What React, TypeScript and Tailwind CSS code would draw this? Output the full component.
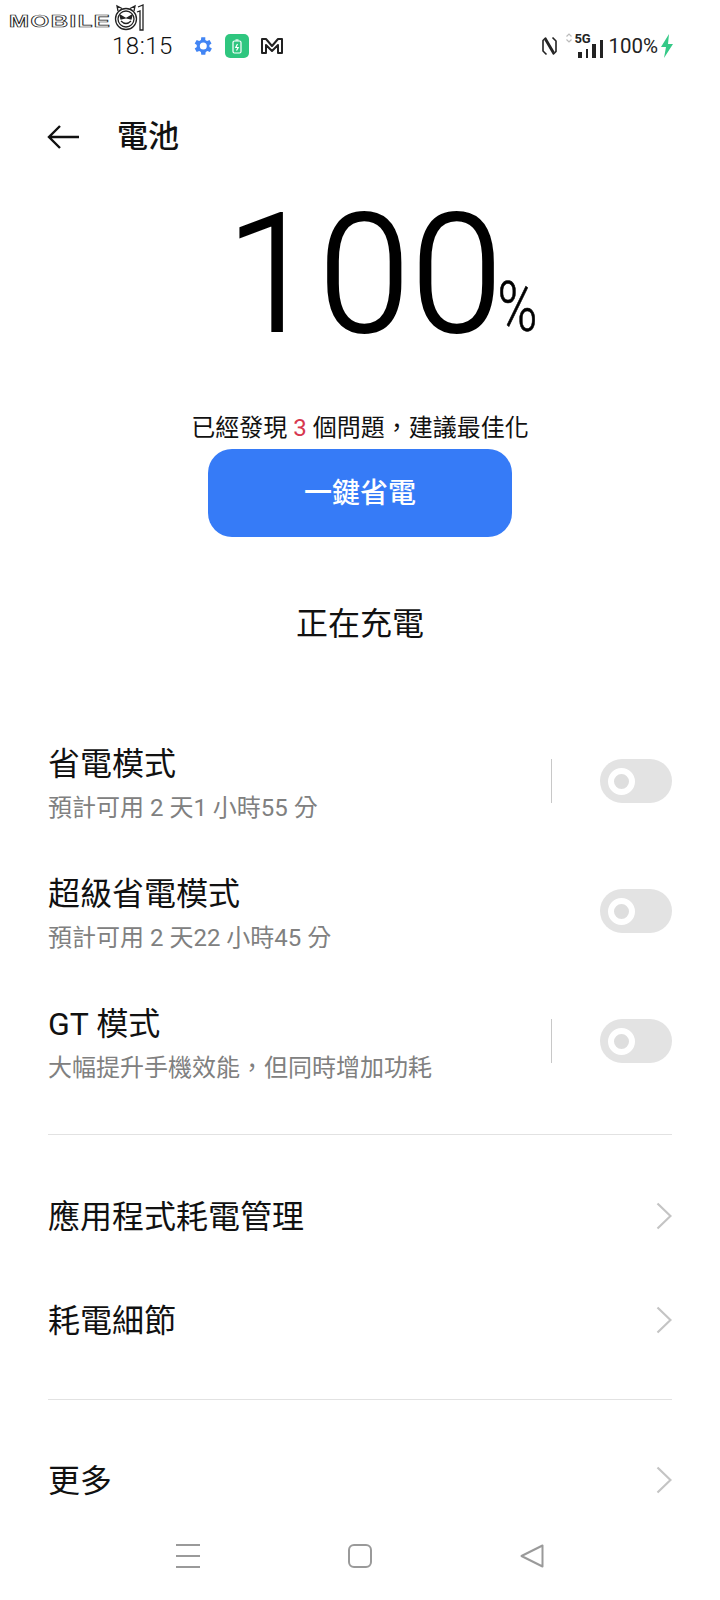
import React from 'react';

const Toggle: React.FC = () => (
  <div className="w-[72px] h-[44px] rounded-full bg-[#e3e3e3] flex items-center pl-[8px] shrink-0 mb-[4px]">
    <div className="w-[27px] h-[27px] rounded-full border-[6px] border-white bg-[#dedede]" />
  </div>
);

interface ModeRowProps {
  title: string;
  sub: string;
  divider?: boolean;
}

const ModeRow: React.FC<ModeRowProps> = ({ title, sub, divider }) => (
  <div className="flex items-center h-[130px]">
    <div className="flex-1">
      <div className="text-[32px] leading-[44px] text-[#111]">{title}</div>
      <div className="text-[24px] leading-[34px] text-[#808080] mt-[5px]">{sub}</div>
    </div>
    {divider && <div className="w-[1px] h-[44px] bg-[#c8c8c8] mr-[48px] mb-[4px]" />}
    <Toggle />
  </div>
);

const Chevron: React.FC = () => (
  <svg width="16" height="28" viewBox="0 0 16 28" fill="none" stroke="#c4c4c4" strokeWidth="2.2" className="mb-[3px]">
    <path d="M1.5 1.5 L14.5 14 L1.5 26.5" />
  </svg>
);

const LinkRow: React.FC<{ title: string; className: string }> = ({ title, className }) => (
  <div className={`flex items-center justify-between ${className}`}>
    <span className="text-[32px] leading-[44px] text-[#111]">{title}</span>
    <Chevron />
  </div>
);

const App: React.FC = () => {
  return (
    <div className="relative w-[720px] h-[1600px] bg-white overflow-hidden flex flex-col font-['Roboto','Noto_Sans_CJK_TC',sans-serif]">
      {/* Watermark */}
      <div className="absolute left-[9px] top-[4px] flex items-center">
        <span className="text-[16px] leading-[20px] font-bold tracking-[1px] text-white [-webkit-text-stroke:0.7px_#222] font-['Liberation_Sans',sans-serif] origin-left scale-x-[1.5] w-[105px] mt-[8px]">
          MOBILE
        </span>
        <svg width="30" height="28" viewBox="0 0 30 28" fill="none" stroke="#222" strokeWidth="1.3">
          <circle cx="12" cy="15" r="10.5" />
          <circle cx="12" cy="15" r="8" />
          <path d="M6 11 L11 14 L7 15 Z M18 11 L13 14 L17 15 Z" fill="#222" />
          <path d="M7 17 Q12 22 17 17" />
          <path d="M4 7 L3 2 L8 4.500 M16 4.500 L21 2 L20 7" />
          <path d="M24 3 L29 1 L29 26 L26 26 L26 7 L23 8" />
        </svg>
      </div>

      {/* Status bar */}
      <div className="flex items-center h-[40px] mt-[26px] pl-[112px] pr-[46px] shrink-0">
        <span className="text-[24px] leading-none text-[#111] tracking-[0.5px] font-light w-[78px]">18:15</span>
        <svg width="24" height="24" viewBox="0 0 24 24" fill="#4285f4">
          <path d="M19.4 13a7.5 7.5 0 0 0 0-2l2.100-1.600-2-3.500-2.500 1a7.600 7.600 0 0 0-1.700-1L15.300 3.200h-4l-.4 2.700a7.600 7.600 0 0 0-1.700 1l-2.500-1-2 3.500L6.800 11a7.500 7.500 0 0 0 0 2l-2.100 1.600 2 3.500 2.500-1a7.600 7.600 0 0 0 1.700 1l.4 2.700h4l.4-2.700a7.600 7.600 0 0 0 1.700-1l2.500 1 2-3.500zM13.300 15.500a3.500 3.500 0 1 1 0-7 3.500 3.500 0 0 1 0 7z" />
        </svg>
        <div className="w-[24px] h-[24px] rounded-[5px] bg-[#2fc67f] flex items-center justify-center ml-[11px]">
          <svg width="10" height="15" viewBox="0 0 10 15" fill="none" stroke="white" strokeWidth="1.200">
            <rect x="1" y="2" width="8" height="12" rx="1.500" />
            <path d="M3.500 1h3" />
            <path d="M5.500 5 L3.800 8.500 H6.200 L4.500 11.500" />
          </svg>
        </div>
        <svg width="24" height="20" viewBox="0 0 24 20" fill="none" stroke="#222" strokeWidth="2" className="ml-[11px]">
          <path d="M2 17 V3 H6 L12 10 L18 3 H22 V17 H18 V9 L12 15 L6 9 V17 Z" strokeLinejoin="round" />
        </svg>
        <div className="flex-1" />
        <svg width="15" height="20" viewBox="0 0 15 20" fill="none" stroke="#222" strokeWidth="1.600" strokeLinejoin="round">
          <path d="M4.500 18.500 L1 15 V4.500 L3.500 2 L12 16.500" />
          <path d="M10.500 1.500 L14 5 V15.500 L11.500 18 L3 3.500" />
        </svg>
        <div className="relative flex items-end gap-[4px] ml-[9px] h-[24px] w-[37px]">
          <span className="absolute left-[8px] top-[-2px] text-[13px] leading-[13px] font-bold text-[#222]">5G</span>
          <svg width="6" height="10" viewBox="0 0 6 10" fill="none" stroke="#bbb" strokeWidth="1.200" className="absolute left-[0px] top-[-1px]">
            <path d="M0.500 3.500 L3 1 L5.500 3.500 M0.500 6.500 L3 9 L5.500 6.500" />
          </svg>
          <div className="ml-[12px] w-[4px] h-[6px] bg-[#222]" />
          <div className="w-[3px] h-[9px] bg-[#222]" />
          <div className="w-[4px] h-[14px] bg-[#222]" />
          <div className="w-[4px] h-[18px] bg-[#222]" />
        </div>
        <span className="text-[20.5px] leading-none text-[#222] ml-[5px]">100%</span>
        <svg width="14" height="24" viewBox="0 0 14 24" fill="#35c987" className="ml-[2px]">
          <path d="M9 0 L1 13 H6 L4 24 L13 10 H8 Z" />
        </svg>
      </div>

      {/* Header */}
      <div className="flex items-center h-[44px] mt-[49px] pl-[47px] shrink-0">
        <svg width="32" height="26" viewBox="0 0 32 26" fill="none" stroke="#111" strokeWidth="2.400">
          <path d="M32 13 H2 M13 2 L2 13 L13 24" />
        </svg>
        <span className="text-[31px] leading-[44px] font-medium text-[#111] ml-[38px]">電池</span>
      </div>

      {/* Battery level */}
      <div className="flex items-end h-[170px] mt-[34px] shrink-0 pl-[226px]">
        <span className="text-[165px] leading-[170px] font-light text-black tracking-[1px] mb-[3px] [-webkit-text-stroke:2px_#000]">
          10<span className="tracking-[-5px]">0</span>
        </span>
        <span className="text-[54px] leading-[60px] font-light text-black mb-[20px] scale-y-[1.3] origin-[50%_47px] [-webkit-text-stroke:0.5px_#000]">%</span>
      </div>

      <div className="text-[24px] leading-[34px] text-[#111] text-center mt-[48px] shrink-0">
        已經發現 <span className="text-[#d7384f]">3</span> 個問題，建議最佳化
      </div>

      <div className="w-[304px] h-[88px] mx-auto rounded-[24px] bg-[#367bf7] flex items-center justify-center text-white text-[28px] font-medium pt-[2px] mt-[4px] shrink-0">
        一鍵省電
      </div>

      <div className="text-[32px] leading-[44px] text-[#111] text-center mt-[65px] shrink-0">正在充電</div>

      {/* Modes */}
      <div className="px-[48px] mt-[72px] flex flex-col shrink-0">
        <ModeRow title="省電模式" sub="預計可用 2 天1 小時55 分" divider />
        <ModeRow title="超級省電模式" sub="預計可用 2 天22 小時45 分" />
        <ModeRow title="GT 模式" sub="大幅提升手機效能，但同時增加功耗" divider />

        <div className="h-[1px] bg-[#e2e2e2] mt-[26px]" />
        <LinkRow title="應用程式耗電管理" className="mt-[60px]" />
        <LinkRow title="耗電細節" className="mt-[60px]" />
        <div className="h-[1px] bg-[#e2e2e2] mt-[56px]" />
        <LinkRow title="更多" className="mt-[59px]" />
      </div>

      {/* Nav bar */}
      <div className="absolute bottom-0 left-0 right-0 h-[90px] flex items-start pt-[34px] pl-[176px]">
        <svg width="24" height="24" viewBox="0 0 24 24" fill="none" stroke="#9a9a9a" strokeWidth="2">
          <path d="M0 1h24M0 12h24M0 23h24" />
        </svg>
        <svg width="24" height="24" viewBox="0 0 24 24" fill="none" stroke="#9a9a9a" strokeWidth="2" className="ml-[148px]">
          <rect x="1" y="1" width="22" height="22" rx="5" />
        </svg>
        <svg width="24" height="24" viewBox="0 0 24 24" fill="none" stroke="#9a9a9a" strokeWidth="2" strokeLinejoin="round" className="ml-[148px]">
          <path d="M22.500 1.500 V22.500 L1.500 12 Z" />
        </svg>
      </div>
    </div>
  );
};

export default App;
